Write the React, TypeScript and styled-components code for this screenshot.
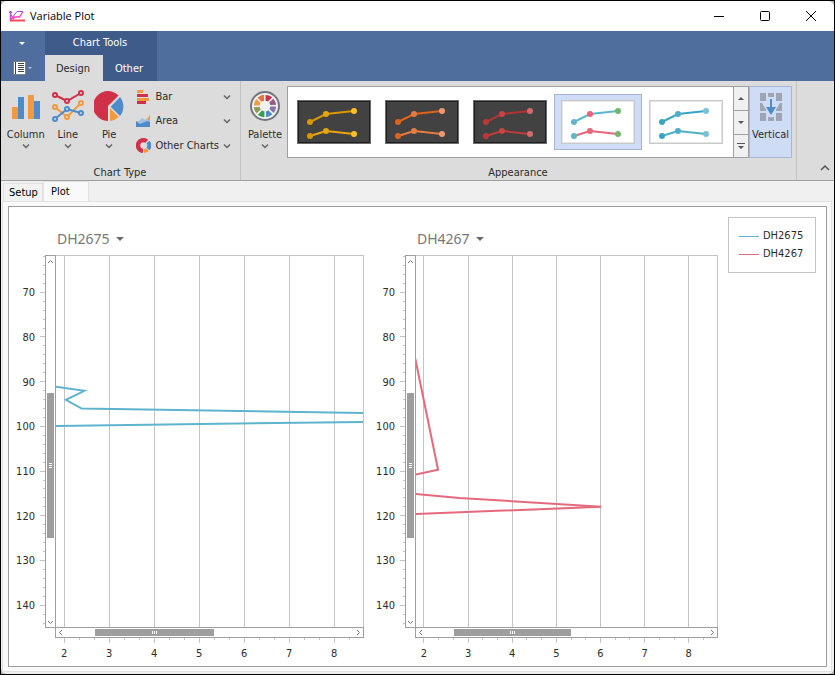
import React from "react";
import styled, { createGlobalStyle } from "styled-components";

const uiFont = '"DejaVu Sans Condensed", "Noto Sans", sans-serif';

const GlobalStyle = createGlobalStyle`
  *, *::before, *::after { box-sizing: border-box; }
  html, body { margin: 0; background: #000; }
  body { font: 11px/14px ${uiFont}; color: #2b2b2b; }
  button { font: inherit; color: inherit; border: 0; padding: 0; margin: 0; background: none; }
  svg { display: block; flex: none; }
`;

/* ---------- window ---------- */

const Frame = styled.div`
  height: 100vh;
  min-height: 480px;
  border: 1px solid #000;
  background: #b4b4b4;
`;
const Window = styled.div`
  height: 100%;
  display: flex;
  flex-direction: column;
  background: #f0f0f0;
  border-radius: 6px;
  overflow: hidden;
`;
const TitleBar = styled.header`
  height: 30px;
  flex: none;
  display: flex;
  align-items: center;
  padding-left: 8px;
  background: #fff;
`;
const Title = styled.h1`
  flex: 1;
  margin: 0 0 0 5px;
  font: 400 11px/16px "Open Sans", "Noto Sans", sans-serif;
  color: #000;
`;
const WindowButton = styled.button`
  width: 46px;
  height: 30px;
  display: grid;
  place-items: center;
`;

/* ---------- ribbon header ---------- */

const Band = styled.div`
  height: 50px;
  flex: none;
  display: flex;
  background: #4f6e9e;
  color: #fff;
`;
const QuickColumn = styled.div`
  width: 44px;
  padding-right: 2px;
  display: grid;
  grid-template-rows: 24px 26px;
`;
const QuickButton = styled.button`
  display: flex;
  align-items: center;
  justify-content: center;
  gap: 2px;
`;
const ToolsContext = styled.div`
  background: #3f5b89;
  display: grid;
  grid-template-rows: 24px 26px;
`;
const ContextTitle = styled.div`
  line-height: 24px;
  text-align: center;
  padding-right: 2px;
`;
const RibbonTabs = styled.div`
  display: flex;
`;
const RibbonTab = styled.button<{ $active?: boolean; $width: number }>`
  width: ${(p) => p.$width}px;
  padding: 1px 2px 0 0;
  background: ${(p) => (p.$active ? "#dcdcdc" : "transparent")};
  color: ${(p) => (p.$active ? "#2b2b2b" : "#fff")};
`;

/* ---------- ribbon body ---------- */

const Ribbon = styled.div`
  height: 100px;
  flex: none;
  display: flex;
  background: #dcdcdc;
  border-bottom: 1px solid #a0a0a0;
`;
const Group = styled.section`
  display: flex;
  flex-direction: column;
  border-right: 1px solid #c3c3c3;
  padding: 5px 4px 0 3px;
`;
const GroupBody = styled.div`
  height: 72px;
  display: flex;
`;
const GroupCaption = styled.div`
  text-align: center;
  line-height: 30px;
  height: 22px;
`;
const LargeButton = styled.button<{ $width: number; $checked?: boolean }>`
  width: ${(p) => p.$width}px;
  height: 72px;
  display: flex;
  flex-direction: column;
  align-items: center;
  background: ${(p) => (p.$checked ? "#cfdcf5" : "transparent")};
  border: 1px solid ${(p) => (p.$checked ? "#a8b6d3" : "transparent")};
`;
const LargeIcon = styled.span`
  height: 36px;
  display: flex;
  align-items: center;
  margin-top: 1px;
`;
const LargeLabel = styled.span`
  margin-top: 4px;
  margin-bottom: 1px;
`;
const SmallColumn = styled.div`
  flex: 1;
  display: flex;
  flex-direction: column;
  margin-top: -1px;
`;
const SmallButton = styled.button`
  height: 25px;
  display: flex;
  align-items: center;
  gap: 4px;
  padding: 0 5px 0 6px;
  text-align: left;
`;
const SmallLabel = styled.span`
  flex: 1;
  white-space: nowrap;
`;
const Gallery = styled.div`
  display: flex;
  height: 72px;
  background: #fff;
  border: 1px solid #a0a0a0;
  border-right: 0;
  padding-left: 2px;
  margin-left: 1px;
`;
const GalleryItem = styled.button<{ $selected?: boolean }>`
  width: 88px;
  height: 56px;
  margin-top: 7px;
  display: grid;
  place-items: center;
  background: ${(p) => (p.$selected ? "#cfdcf5" : "transparent")};
  border: 1px solid ${(p) => (p.$selected ? "#a3b4d2" : "transparent")};
`;
const GalleryScroll = styled.div`
  width: 16px;
  margin: -1px 0 -1px 3px;
  display: grid;
  grid-template-rows: 23px 24px 23px;
  border: 1px solid #a0a0a0;
  background: #f0f0f0;
`;
const GalleryButton = styled.button`
  display: grid;
  place-items: center;
  & + & {
    border-top: 1px solid #a0a0a0;
  }
`;
const RibbonRest = styled.div`
  flex: 1;
  display: flex;
  justify-content: flex-end;
  align-items: flex-end;
  padding: 0 4px 8px 0;
`;

/* ---------- document tabs ---------- */

const DocTabs = styled.div`
  height: 20px;
  flex: none;
  display: flex;
  align-items: flex-end;
  padding-left: 2px;
`;
const DocTab = styled.button<{ $active?: boolean }>`
  width: ${(p) => (p.$active ? 46 : 40)}px;
  height: ${(p) => (p.$active ? 20 : 18)}px;
  padding-left: ${(p) => (p.$active ? 7 : 5)}px;
  text-align: left;
  color: #000;
  background: ${(p) => (p.$active ? "#f9f9f9" : "#f2f2f2")};
  border: 1px solid #e2e2e2;
  border-bottom: 0;
`;
const Page = styled.main`
  flex: 1;
  min-height: 0;
  margin: 0 2px 2px 1px;
  padding: 4px 4px 4px 5px;
  background: #f9f9f9;
  border: 1px solid #e2e2e2;
`;
const ChartPanel = styled.div`
  height: 100%;
  display: grid;
  grid-template-columns: minmax(0, 355fr) minmax(0, 349fr) auto;
  column-gap: 5px;
  padding-right: 10px;
  background: #fff;
  border: 1px solid #9e9e9e;
`;

/* ---------- plot ---------- */

const Pane = styled.section`
  min-height: 0;
  display: grid;
  grid-template-columns: 36px 11px minmax(0, 1fr);
  grid-template-rows: 48px minmax(0, 1fr) 11px 28px;
`;
const PaneTitle = styled.button`
  grid-column: 1 / -1;
  justify-self: start;
  display: flex;
  align-items: center;
  gap: 6px;
  padding: 15px 0 0 48px;
  font: 14px/20px "Noto Sans", sans-serif;
  color: #777;
`;
const DepthAxis = styled.svg`
  grid-row: 2;
  grid-column: 1;
  width: 100%;
  height: calc(100% - 1px);
  align-self: end;
  overflow: visible;
`;
const ValueAxis = styled.svg`
  grid-row: 4;
  grid-column: 3;
  width: calc(100% - 1px);
  height: 28px;
  overflow: visible;
`;
const AxisText = styled.text`
  font: 11px ${uiFont};
  fill: #2b2b2b;
`;
const VerticalScroll = styled.div`
  grid-row: 2;
  grid-column: 2;
  border: 1px solid #9e9e9e;
  border-bottom: 0;
  display: grid;
  grid-template-rows: 10px 127fr 145fr 79fr 10px;
  padding: 0 1px;
`;
const ScrollCorner = styled.div`
  grid-row: 3;
  grid-column: 2;
  border-top: 1px solid #9e9e9e;
  border-right: 1px solid #9e9e9e;
`;
const HorizontalScroll = styled.div`
  grid-row: 3;
  grid-column: 3;
  border: 1px solid #9e9e9e;
  border-left: 0;
  display: grid;
  grid-template-columns: 9px 30fr 119fr 140fr 9px;
  padding: 1px 0;
`;
const ScrollButton = styled.button`
  display: grid;
  place-items: center;
`;
const Thumb = styled.div`
  display: grid;
  place-items: center;
  background: #9e9e9e;
`;
const PlotArea = styled.div`
  grid-row: 2;
  grid-column: 3;
  min-height: 0;
  border-top: 1px solid #c4c4c4;
  border-right: 1px solid #c4c4c4;
`;
const PlotCanvas = styled.svg`
  width: 100%;
  height: 100%;
`;
const Legend = styled.ul`
  align-self: start;
  list-style: none;
  width: 88px;
  margin: 10px 0 0 5px;
  padding: 9px 10px;
  border: 1px solid #c4c4c4;
`;
const LegendItem = styled.li`
  display: flex;
  align-items: center;
  gap: 4px;
  height: 18px;
  line-height: 16px;
  white-space: nowrap;
`;
const LegendKey = styled.span<{ $color: string }>`
  width: 20px;
  height: 1px;
  flex: none;
  background: ${(p) => p.$color};
`;

/* ---------- glyphs ---------- */

const Chevron = ({ color = "#666" }: { color?: string }) => (
  <svg width="8" height="6" viewBox="0 0 8 6">
    <path d="M1 1.5l3 3 3-3" fill="none" stroke={color} strokeWidth="1.5" />
  </svg>
);

const Triangle = ({ size = 6, color = "#fff", up = false }: { size?: number; color?: string; up?: boolean }) => (
  <svg width={size} height={size / 2} viewBox="0 0 6 3">
    <path d={up ? "M0 3h6L3 0z" : "M0 0h6L3 3z"} fill={color} />
  </svg>
);

const AppIcon = () => (
  <svg width="16" height="12" viewBox="0 0 16 12">
    <path d="M1.5 1v9.500" stroke="#b64be6" strokeWidth="1.4" />
    <path d="M0 3 1.500 1 3 3" fill="none" stroke="#a33be8" />
    <path d="M1 10.500h15" stroke="#ff4b55" strokeWidth="1.8" />
    <path d="M2 9.500 6 4l2-2.500h6" fill="none" stroke="#9752e8" />
    <path d="M2 9.500 5.500 7h5L14 1.500M2 5l3 4" fill="none" stroke="#ff3db8" strokeWidth="1.3" />
  </svg>
);

const BookIcon = () => (
  <svg width="13" height="14" viewBox="0 0 13 14" shapeRendering="crispEdges">
    <path d="M0 0h13v14H0z" fill="#fff" />
    <path d="M2 1h1v12H2z" fill="#3c4450" />
    <path d="M5 2h6v1H5zM5 4h6v1H5zM5 6h6v1H5zM5 8h6v1H5zM5 10h6v1H5z" fill="#444" />
    <path d="M0 0h13v1H0zM0 13h13v1H0zM12 0h1v14h-1zM0 0h1v14H0z" fill="#7a7f88" />
  </svg>
);

const RED = "#d13148";
const ORANGE = "#f29a3f";
const BLUE = "#4d8bca";

const ColumnIcon = () => (
  <svg width="30" height="30" viewBox="0 0 30 30">
    <path d="M1 16h6v12H1zM17 4h6v24h-6z" fill={ORANGE} />
    <path d="M7 6h6v22H7zM23 10h6v18h-6z" fill={BLUE} />
  </svg>
);

const lineSeries = [
  { color: RED, points: [[3, 5], [15, 11], [29, 3]] },
  { color: ORANGE, points: [[3, 17], [15, 27], [29, 13]] },
  { color: BLUE, points: [[3, 29], [15, 19], [29, 23]] },
];

const LineIcon = () => (
  <svg width="32" height="32" viewBox="0 0 32 32">
    {lineSeries.map((s) => (
      <g key={s.color} stroke={s.color} strokeWidth="2">
        <polyline points={s.points.join(" ")} fill="none" />
        {s.points.map(([x, y]) => (
          <circle key={x} cx={x} cy={y} r="2" fill="#dcdcdc" />
        ))}
      </g>
    ))}
  </svg>
);

const PieIcon = () => (
  <svg width="30" height="30" viewBox="0 0 30 30">
    <path d="M14 15v15A15 15 0 1 1 24.600 4.400z" fill={RED} />
    <path d="M26 6a15 15 0 0 1 0 19l-9.300-9.300z" fill={BLUE} />
    <path d="M16 17l8.700 9A14.500 14.500 0 0 1 16 30z" fill={ORANGE} />
  </svg>
);

const BarIcon = () => (
  <svg width="15" height="15" viewBox="0 0 15 15" shapeRendering="crispEdges">
    <path d="M1 0h6v3H1zM1 8h12v3H1z" fill={ORANGE} />
    <path d="M1 4h11v3H1zM1 11h9v3H1z" fill={RED} />
  </svg>
);

const AreaIcon = () => (
  <svg width="15" height="15" viewBox="0 0 15 15">
    <path d="M0 7l4 1h5l5-7v8l-6 4z" fill={ORANGE} />
    <path d="M2 8l4-4 3 2 2-2 3 4v4H2z" fill="#9cc2e5" />
    <path d="M0 7l4 3 5-2 2-1 3 1v5H0z" fill={BLUE} />
  </svg>
);

const DonutIcon = () => (
  <svg width="15" height="15" viewBox="0 0 15 15">
    <path d="M7 12.500A5 5 0 1 1 10.500 3.700" fill="none" stroke={RED} strokeWidth="5" />
    <circle cx="7.5" cy="7.5" r="3.200" fill="#dcdcdc" />
    <path d="M12 4a5.500 5.500 0 0 1 0 7" fill="none" stroke={BLUE} strokeWidth="4" />
    <path d="M8 11l2.500-.5 2.500 3-5 1.500z" fill={ORANGE} />
  </svg>
);

const wheelColors = [RED, "#955b82", "#8672a9", BLUE, "#35a055", "#8c9a52", ORANGE, "#e8733d"];

const PaletteIcon = () => (
  <svg width="30" height="30" viewBox="0 0 30 30">
    <circle cx="15" cy="15" r="14" fill="#f0f0f0" stroke="#73757e" strokeWidth="2" />
    {wheelColors.map((c, i) => (
      <path key={c} d="M15.600 4c2.200 0 4.600 .8 6.500 2.300l-4 4.300a5 5 0 0 0-2.500-.9z" fill={c} transform={`rotate(${i * 45} 15 15)`} />
    ))}
  </svg>
);

const VerticalIcon = () => (
  <svg width="24" height="30" viewBox="0 0 24 30">
    <path
      d="M1 2h6v8H1zM9 2h6v4H9zM17 2h6v8h-6zM1 12h6v8H1zM17 12h6v8h-6zM1 22h6v8H1zM9 26h6v4H9zM17 22h6v8h-6z"
      fill="#9da5b5"
    />
    <path d="M3 12h5V7h8v5h5l-9 15z" fill="#cfdcf5" />
    <path d="M11 8h2v8h4l-5 8-5-8h4z" fill={BLUE} />
  </svg>
);

type Swatch = { name: string; dark?: boolean; selected?: boolean; dots: string[]; strokes: string[] };

const swatches: Swatch[] = [
  { name: "Dark yellow", dark: true, dots: ["#d99700", "#e8a50c", "#ffbf2b"], strokes: ["#d99700", "#e8a50c"] },
  { name: "Dark orange", dark: true, dots: ["#e0621d", "#e67c42", "#ee9a70"], strokes: ["#e0621d", "#e67c42"] },
  { name: "Dark red", dark: true, dots: ["#bd3737", "#c94343", "#d56a6a"], strokes: ["#b03434", "#bf3c3c"] },
  { name: "Light mixed", selected: true, dots: ["#5fb5ce", "#e8657a", "#6cb96b"], strokes: ["#5fb5ce", "#e8657a"] },
  { name: "Light blue", dots: ["#39a5c3", "#50aecb", "#79c2d6"], strokes: ["#39a5c3", "#50aecb"] },
];

const SwatchDrawing = ({ swatch }: { swatch: Swatch }) => {
  const { dots, strokes, dark } = swatch;
  const rows = [
    [[13, 22], [29, 14], [57, 11]],
    [[13, 36], [29, 31], [57, 34]],
  ];
  return (
    <svg width="74" height="44" viewBox="0 0 74 44">
      <rect x="0.5" y="0.5" width="73" height="43" fill={dark ? "#424242" : "#fff"} stroke={dark ? "#6c6c6c" : "#c9c9c9"} />
      <rect x="1.5" y="1.5" width="71" height="41" fill="none" stroke={dark ? "#202020" : "#e4e4e4"} />
      {rows.map((row, i) => (
        <g key={i}>
          <polyline points={row.join(" ")} fill="none" stroke={strokes[i]} strokeWidth="2" />
          {row.map(([x, y], j) => (
            <circle key={x} cx={x} cy={y} r="3" fill={dots[j]} />
          ))}
        </g>
      ))}
    </svg>
  );
};

/* ---------- chart data ---------- */

type Point = [number, number];
type Hole = { name: string; color: string; segments: Point[][] };

const holes: Hole[] = [
  {
    name: "DH2675",
    color: "#5eb4cf",
    segments: [
      [[1.8, 91.1], [2.45, 92.05], [2.04, 94.05], [2.39, 96], [8.65, 97]],
      [[8.65, 99], [1.8, 99.9]],
    ],
  },
  {
    name: "DH4267",
    color: "#e5697c",
    segments: [
      [[1.8, 84.7], [2.32, 109.7], [1.8, 110.8]],
      [[1.8, 115.1], [2.8, 116], [6.02, 118], [1.8, 119.6]],
    ],
  },
];

const X_MIN = 1.82;
const X_MAX = 8.64;
const Y_MIN = 61.88;
const Y_MAX = 144.88;
const xPos = (v: number) => `${((v - X_MIN) / (X_MAX - X_MIN)) * 100}%`;
const yPos = (v: number) => `${((v - Y_MIN) / (Y_MAX - Y_MIN)) * 100}%`;
const xMajor = [2, 3, 4, 5, 6, 7, 8];
const xMinor = xMajor.flatMap((v) => [v + 1 / 3, v + 2 / 3]).filter((v) => v < 8.5);
const yTicks = Array.from({ length: 42 }, (_, i) => 62 + i * 2);

const ScrollArrow = ({ turn }: { turn: number }) => (
  <svg width="7" height="7" viewBox="0 0 7 7">
    <path d="M1 5l2.500-2.500L6 5" fill="none" stroke="#777" transform={`rotate(${turn} 3.500 3.500)`} />
  </svg>
);

const Grip = ({ turn = 0 }: { turn?: number }) => (
  <svg width="5" height="5" viewBox="0 0 5 5" shapeRendering="crispEdges">
    <path d={turn ? "M0 1h1v3H0zM2 1h1v3H2zM4 1h1v3H4z" : "M1 0h3v1H1zM1 2h3v1H1zM1 4h3v1H1z"} fill="#fff" />
  </svg>
);

const PlotPane = ({ hole }: { hole: Hole }) => (
  <Pane aria-label={hole.name}>
    <PaneTitle>
      {hole.name}
      <Triangle size={8} color="#6a6a6a" />
    </PaneTitle>
    <DepthAxis>
      {yTicks.map((v) => {
        const major = v % 10 === 0;
        return (
          <g key={v}>
            <line x1={major ? 31 : 34} x2="36" y1={yPos(v)} y2={yPos(v)} stroke="#c4c4c4" shapeRendering="crispEdges" />
            {major && (
              <AxisText x="26" y={yPos(v)} dy="4" textAnchor="end">
                {v}
              </AxisText>
            )}
          </g>
        );
      })}
    </DepthAxis>
    <VerticalScroll>
      <ScrollButton aria-label="Scroll up"><ScrollArrow turn={0} /></ScrollButton>
      <span />
      <Thumb><Grip /></Thumb>
      <span />
      <ScrollButton aria-label="Scroll down"><ScrollArrow turn={180} /></ScrollButton>
    </VerticalScroll>
    <PlotArea>
      <PlotCanvas>
        {xMajor.map((v) => (
          <line key={v} x1={xPos(v)} x2={xPos(v)} y1="0" y2="100%" stroke="#c4c4c4" shapeRendering="crispEdges" />
        ))}
        <svg width="100%" height="100%" viewBox={`${X_MIN} ${Y_MIN} ${X_MAX - X_MIN} ${Y_MAX - Y_MIN}`} preserveAspectRatio="none">
          {hole.segments.map((points, i) => (
            <polyline key={i} points={points.join(" ")} fill="none" stroke={hole.color} strokeWidth="2" vectorEffect="non-scaling-stroke" />
          ))}
        </svg>
      </PlotCanvas>
    </PlotArea>
    <ScrollCorner />
    <HorizontalScroll>
      <ScrollButton aria-label="Scroll left"><ScrollArrow turn={270} /></ScrollButton>
      <span />
      <Thumb><Grip turn={90} /></Thumb>
      <span />
      <ScrollButton aria-label="Scroll right"><ScrollArrow turn={90} /></ScrollButton>
    </HorizontalScroll>
    <ValueAxis>
      {xMinor.map((v) => (
        <line key={v} x1={xPos(v)} x2={xPos(v)} y1="0" y2="2" stroke="#c4c4c4" shapeRendering="crispEdges" />
      ))}
      {xMajor.map((v) => (
        <g key={v}>
          <line x1={xPos(v)} x2={xPos(v)} y1="0" y2="5" stroke="#c4c4c4" shapeRendering="crispEdges" />
          <AxisText x={xPos(v)} y="19" textAnchor="middle">
            {v}
          </AxisText>
        </g>
      ))}
    </ValueAxis>
  </Pane>
);

const LargeItem = ({ icon, label, width }: { icon: React.ReactNode; label: string; width: number }) => (
  <LargeButton $width={width}>
    <LargeIcon>{icon}</LargeIcon>
    <LargeLabel>{label}</LargeLabel>
    <Chevron />
  </LargeButton>
);

const SmallItem = ({ icon, label }: { icon: React.ReactNode; label: string }) => (
  <SmallButton>
    {icon}
    <SmallLabel>{label}</SmallLabel>
    <Chevron />
  </SmallButton>
);

const ChartTypeGroup = styled(Group)`
  width: 240px;
`;

export default function App() {
  return (
    <Frame>
      <GlobalStyle />
      <Window>
        <TitleBar>
          <AppIcon />
          <Title>Variable Plot</Title>
          <WindowButton aria-label="Minimize">
            <svg width="10" height="10" shapeRendering="crispEdges"><path d="M0 5h10v1H0z" /></svg>
          </WindowButton>
          <WindowButton aria-label="Maximize">
            <svg width="10" height="10"><rect x="0.5" y="0.5" width="9" height="9" rx="1" fill="none" stroke="#000" /></svg>
          </WindowButton>
          <WindowButton aria-label="Close">
            <svg width="10" height="10"><path d="M0 0l10 10M10 0 0 10" stroke="#000" /></svg>
          </WindowButton>
        </TitleBar>

        <Band>
          <QuickColumn>
            <QuickButton aria-label="Customize quick access"><Triangle /></QuickButton>
            <QuickButton aria-label="Application menu">
              <BookIcon />
              <Triangle size={4} color="#b9c4d6" />
            </QuickButton>
          </QuickColumn>
          <ToolsContext>
            <ContextTitle>Chart Tools</ContextTitle>
            <RibbonTabs>
              <RibbonTab $active $width={58}>Design</RibbonTab>
              <RibbonTab $width={54}>Other</RibbonTab>
            </RibbonTabs>
          </ToolsContext>
        </Band>

        <Ribbon>
          <ChartTypeGroup>
            <GroupBody>
              <LargeItem icon={<ColumnIcon />} label="Column" width={44} />
              <LargeItem icon={<LineIcon />} label="Line" width={41} />
              <LargeItem icon={<PieIcon />} label="Pie" width={43} />
              <SmallColumn>
                <SmallItem icon={<BarIcon />} label="Bar" />
                <SmallItem icon={<AreaIcon />} label="Area" />
                <SmallItem icon={<DonutIcon />} label="Other Charts" />
              </SmallColumn>
            </GroupBody>
            <GroupCaption>Chart Type</GroupCaption>
          </ChartTypeGroup>
          <Group>
            <GroupBody>
              <LargeItem icon={<PaletteIcon />} label="Palette" width={42} />
              <Gallery>
                {swatches.map((s) => (
                  <GalleryItem key={s.name} $selected={s.selected} aria-label={s.name}>
                    <SwatchDrawing swatch={s} />
                  </GalleryItem>
                ))}
                <GalleryScroll>
                  <GalleryButton aria-label="Previous row"><Triangle up color="#555" /></GalleryButton>
                  <GalleryButton aria-label="Next row"><Triangle color="#555" /></GalleryButton>
                  <GalleryButton aria-label="More styles">
                    <svg width="8" height="6" viewBox="0 0 8 6"><path d="M0 0h8v1H0zM1 3h6L4 6z" fill="#555" /></svg>
                  </GalleryButton>
                </GalleryScroll>
              </Gallery>
              <LargeButton $width={43} $checked>
                <LargeIcon><VerticalIcon /></LargeIcon>
                <LargeLabel>Vertical</LargeLabel>
              </LargeButton>
            </GroupBody>
            <GroupCaption>Appearance</GroupCaption>
          </Group>
          <RibbonRest>
            <button aria-label="Collapse ribbon">
              <svg width="10" height="8" viewBox="0 0 10 8"><path d="M1 6l4-4 4 4" fill="none" stroke="#555" strokeWidth="1.5" /></svg>
            </button>
          </RibbonRest>
        </Ribbon>

        <DocTabs>
          <DocTab>Setup</DocTab>
          <DocTab $active>Plot</DocTab>
        </DocTabs>
        <Page>
          <ChartPanel>
            {holes.map((h) => (
              <PlotPane key={h.name} hole={h} />
            ))}
            <Legend>
              {holes.map((h) => (
                <LegendItem key={h.name}>
                  <LegendKey $color={h.color} />
                  {h.name}
                </LegendItem>
              ))}
            </Legend>
          </ChartPanel>
        </Page>
      </Window>
    </Frame>
  );
}
